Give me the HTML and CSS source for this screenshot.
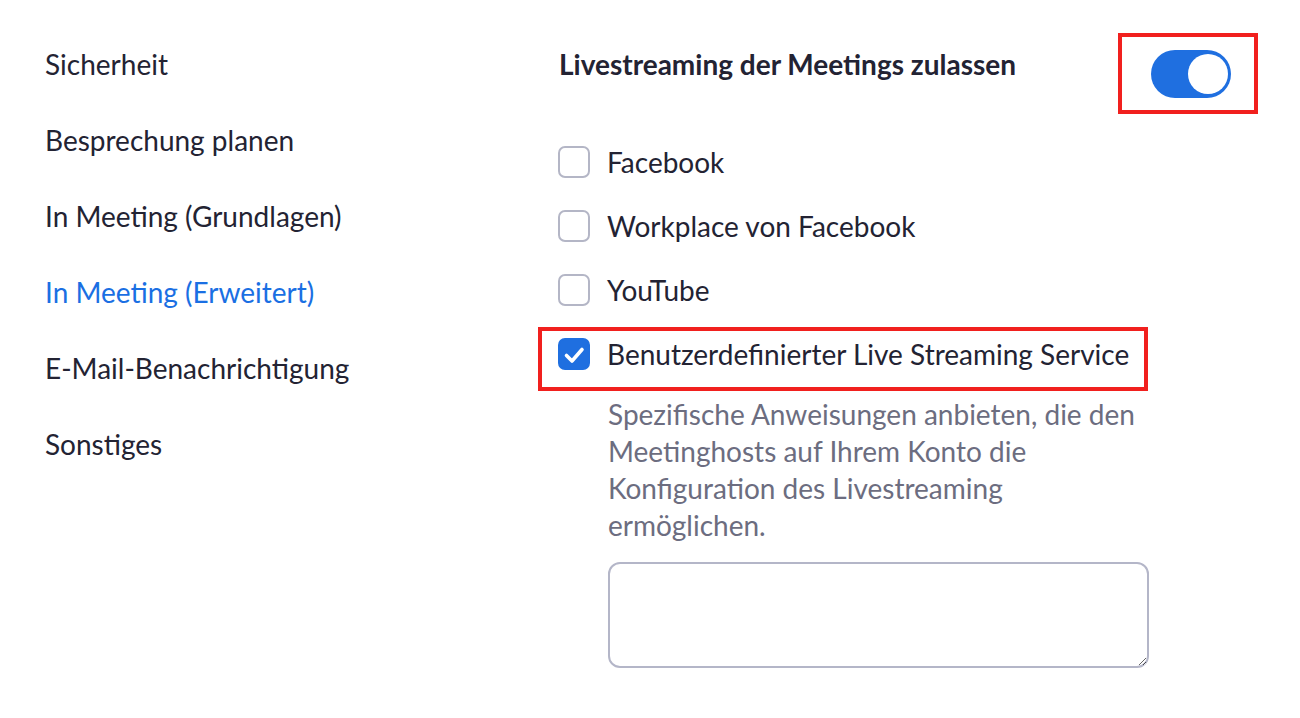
FILE: index.html
```html
<!DOCTYPE html>
<html lang="de">
<head>
<meta charset="utf-8">
<link rel="stylesheet" href="styles.css">
</head>
<body>
<div class="page">
  <nav class="nav">
    <div class="nav-item">Sicherheit</div>
    <div class="nav-item">Besprechung planen</div>
    <div class="nav-item">In Meeting (Grundlagen)</div>
    <div class="nav-item active">In Meeting (Erweitert)</div>
    <div class="nav-item">E-Mail-Benachrichtigung</div>
    <div class="nav-item">Sonstiges</div>
  </nav>
  <main class="main">
    <div class="setting-head">
      <div class="setting-title">Livestreaming der Meetings zulassen</div>
      <div class="toggle-frame">
        <div class="toggle"><div class="knob"></div></div>
      </div>
    </div>
    <div class="options">
      <div class="option"><span class="box"></span><span class="label">Facebook</span></div>
      <div class="option"><span class="box"></span><span class="label">Workplace von Facebook</span></div>
      <div class="option"><span class="box"></span><span class="label">YouTube</span></div>
      <div class="option highlighted">
        <span class="box checked"><svg viewBox="0 0 32 32" width="32" height="32"><path d="M8.5 17.5 L14 23 L24 11.5" fill="none" stroke="#fff" stroke-width="3.6" stroke-linecap="round" stroke-linejoin="round"/></svg></span>
        <span class="label">Benutzerdefinierter Live Streaming Service</span>
      </div>
    </div>
    <div class="desc">Spezifische Anweisungen anbieten, die den Meetinghosts auf Ihrem Konto die Konfiguration des Livestreaming ermöglichen.</div>
    <textarea class="input"></textarea>
  </main>
</div>
</body>
</html>
```
FILE: styles.css
```css
html, body {
  margin: 0;
  padding: 0;
  background: #fff;
}
body {
  font-family: Lato, "Noto Sans", sans-serif;
  color: #232333;
}
.page {
  display: flex;
  width: 1300px;
  height: 718px;
}
.nav {
  width: 558px;
  flex: none;
  padding-left: 45px;
  padding-top: 45px;
  box-sizing: border-box;
  display: flex;
  flex-direction: column;
  gap: 38px;
}
.nav-item {
  font-size: 28px;
  line-height: 38px;
  height: 38px;
  white-space: nowrap;
}
.nav-item.active {
  color: #1a6fe3;
}
.main {
  display: flex;
  flex-direction: column;
  padding-top: 33px;
}
.setting-head {
  display: flex;
  align-items: flex-start;
  width: 699px;
  justify-content: space-between;
  margin-left: 1px;
}
.setting-title {
  font-size: 28px;
  line-height: 34px;
  font-weight: 700;
  margin-top: 14px;
}
.toggle-frame {
  width: 140px;
  height: 81px;
  box-sizing: border-box;
  border: 4px solid #f1201e;
  display: flex;
  align-items: center;
  justify-content: center;
  padding-left: 6px;
}
.toggle {
  width: 80px;
  height: 48px;
  border-radius: 24px;
  background: #1f6fe0;
  position: relative;
}
.knob {
  position: absolute;
  right: 3px;
  top: 4px;
  width: 40px;
  height: 40px;
  border-radius: 50%;
  background: #fff;
}
.options {
  display: flex;
  flex-direction: column;
  margin-top: 16px;
}
.option {
  display: flex;
  align-items: center;
  height: 64px;
  gap: 17px;
  font-size: 28px;
  position: relative;
}
.box {
  width: 32px;
  height: 32px;
  box-sizing: border-box;
  border: 2px solid #b4b6c6;
  border-radius: 7px;
  flex: none;
  display: flex;
  align-items: center;
  justify-content: center;
}
.box.checked {
  background: #1f6fe0;
  border-color: #1f6fe0;
}
.box svg {
  flex: none;
}
.option.highlighted::after {
  content: "";
  position: absolute;
  left: -20px;
  top: 5px;
  width: 610px;
  height: 64px;
  box-sizing: border-box;
  border: 4px solid #f1201e;
  pointer-events: none;
}
.desc {
  margin-top: 10px;
  margin-left: 50px;
  width: 541px;
  font-size: 28px;
  line-height: 37px;
  color: #6c6d80;
}
.input {
  margin-top: 18px;
  margin-left: 50px;
  width: 541px;
  height: 106px;
  box-sizing: border-box;
  border: 2px solid #b4b6c8;
  border-radius: 12px;
  resize: vertical;
  font-family: inherit;
  outline: none;
}
```
